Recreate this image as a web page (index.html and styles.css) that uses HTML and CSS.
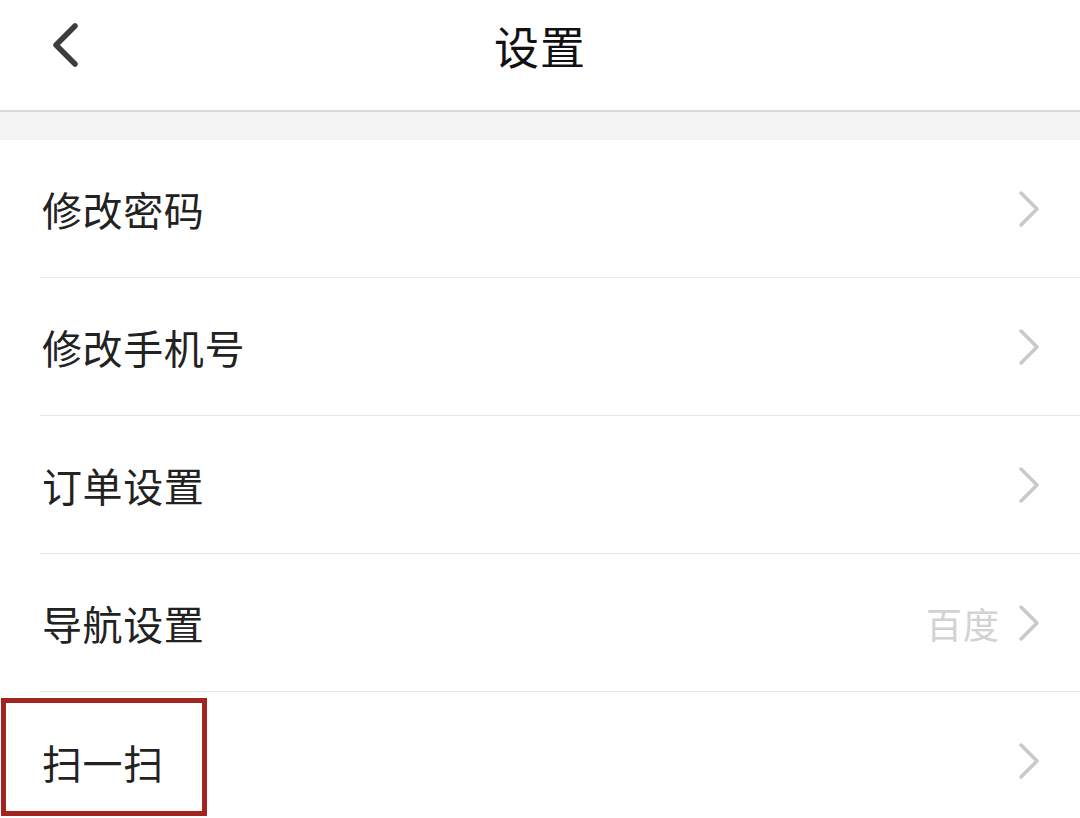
FILE: index.html
```html
<!DOCTYPE html>
<html lang="zh">
<head>
<meta charset="utf-8">
<title>设置</title>
<link rel="stylesheet" href="styles.css">
</head>
<body>
<div class="page">
  <header class="header">
    <div class="back">
      <svg width="30" height="46" viewBox="0 0 30 46"><polyline points="24,4 5,23 24,42" fill="none" stroke="#3d3d3d" stroke-width="5.5" stroke-linecap="round" stroke-linejoin="round"/></svg>
    </div>
    <h1 class="title">设置</h1>
  </header>
  <div class="band"></div>
  <ul class="list">
    <li class="row"><span class="label">修改密码</span><span class="right"><svg class="chev" width="22" height="38" viewBox="0 0 22 38"><polyline points="3,3 19,19 3,35" fill="none" stroke="#c9c9c9" stroke-width="3.5" stroke-linecap="round" stroke-linejoin="round"/></svg></span></li>
    <li class="row"><span class="label">修改手机号</span><span class="right"><svg class="chev" width="22" height="38" viewBox="0 0 22 38"><polyline points="3,3 19,19 3,35" fill="none" stroke="#c9c9c9" stroke-width="3.5" stroke-linecap="round" stroke-linejoin="round"/></svg></span></li>
    <li class="row"><span class="label">订单设置</span><span class="right"><svg class="chev" width="22" height="38" viewBox="0 0 22 38"><polyline points="3,3 19,19 3,35" fill="none" stroke="#c9c9c9" stroke-width="3.5" stroke-linecap="round" stroke-linejoin="round"/></svg></span></li>
    <li class="row"><span class="label">导航设置</span><span class="right"><span class="value">百度</span><svg class="chev" width="22" height="38" viewBox="0 0 22 38"><polyline points="3,3 19,19 3,35" fill="none" stroke="#c9c9c9" stroke-width="3.5" stroke-linecap="round" stroke-linejoin="round"/></svg></span></li>
    <li class="row last"><span class="label">扫一扫</span><span class="right"><svg class="chev" width="22" height="38" viewBox="0 0 22 38"><polyline points="3,3 19,19 3,35" fill="none" stroke="#c9c9c9" stroke-width="3.5" stroke-linecap="round" stroke-linejoin="round"/></svg></span><span class="highlight"></span></li>
  </ul>
</div>
</body>
</html>
```
FILE: styles.css
```css
* { box-sizing: border-box; }
html, body { margin: 0; padding: 0; background: #fff; }
body {
  font-family: "Noto Sans CJK SC", "Noto Sans", sans-serif;
  color: #222;
  width: 1080px;
  height: 818px;
  overflow: hidden;
}
.header {
  height: 112px;
  border-bottom: 2px solid #d9d9d9;
  display: flex;
  align-items: center;
  justify-content: center;
  position: relative;
  background: #fff;
}
.back {
  position: absolute;
  left: 51px;
  top: 22px;
  width: 30px;
  height: 46px;
  display: flex;
}
.title {
  margin: 0 0 20px 0;
  font-size: 45px;
  font-weight: 400;
  letter-spacing: 1px;
  color: #111;
  line-height: 1;
}
.band {
  height: 28px;
  background: #f3f3f3;
}
.list {
  list-style: none;
  margin: 0;
  padding: 0 0 0 40px;
}
.row {
  height: 138px;
  border-bottom: 1px solid #e6e6e6;
  display: flex;
  align-items: center;
  justify-content: space-between;
  padding-right: 40px;
  position: relative;
}
.row.last { border-bottom: none; }
.label {
  font-size: 40px;
  letter-spacing: 0.6px;
  line-height: 1;
  color: #222;
  margin-left: 2px;
  margin-top: 1px;
}
.right {
  display: flex;
  align-items: center;
  gap: 18px;
}
.value {
  font-size: 36px;
  letter-spacing: 1px;
  color: #d2d2d2;
  line-height: 1;
}
.chev { display: block; }
.highlight {
  position: absolute;
  left: -39px;
  top: 6px;
  width: 206px;
  height: 118px;
  border: 5px solid #a3231f;
}
```
